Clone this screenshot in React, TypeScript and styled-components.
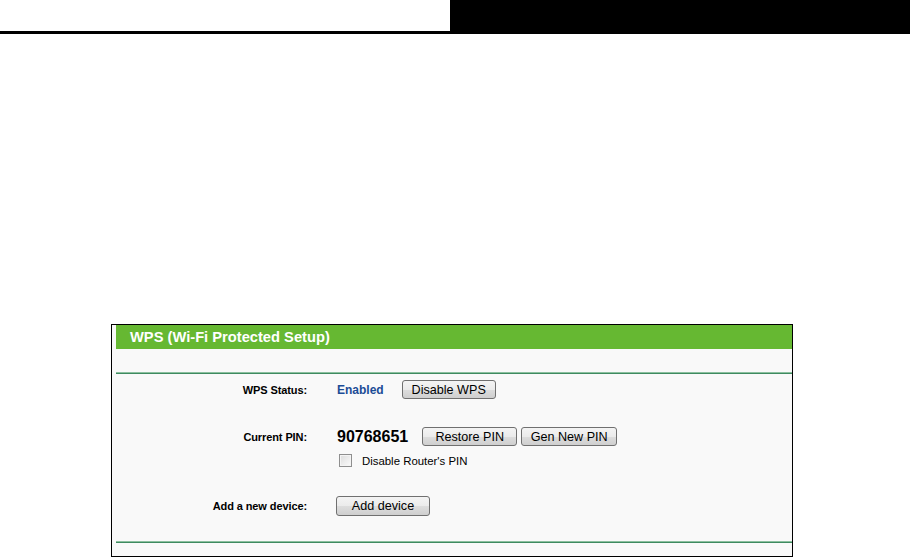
import React from 'react';
import { createGlobalStyle, styled } from 'styled-components';

const GlobalStyle = createGlobalStyle`
    html, body {
        margin: 0;
        padding: 0;
        background: #fff;
        font-family: "Liberation Sans", Arial, sans-serif;
    }
`;

const Page = styled.div`
    width: 910px;
    height: 558px;
    overflow: hidden;
`;

const TopBar = styled.div`
    display: flex;
    height: 34px;
`;

const TopLeft = styled.div`
    width: 450px;
    border-bottom: 3px solid #000;
    box-sizing: border-box;
`;

const TopRight = styled.div`
    flex: 1;
    background: #000;
`;

const Panel = styled.div`
    margin: 290px 0 0 111px;
    width: 682px;
    border: 1px solid #000;
    box-sizing: border-box;
    background: #f9f9f9;
    padding-left: 4px;
`;

const PanelTitle = styled.div`
    height: 24px;
    background: #66b832;
    color: #fff;
    font-weight: bold;
    font-size: 14.7px;
    line-height: 24px;
    padding-left: 14px;
`;

const Divider = styled.div<{ $top: number }>`
    margin-top: ${p => p.$top}px;
    height: 2px;
    background: linear-gradient(#8cc09f 0 50%, #3f8a60 50% 100%);
`;

const Body = styled.div`
    padding-top: 6px;
    display: flex;
    flex-direction: column;
`;

const Row = styled.div<{ $h: number; $top?: number }>`
    display: grid;
    grid-template-columns: 191px 1fr;
    column-gap: 29px;
    align-items: center;
    height: ${p => p.$h}px;
    margin-top: ${p => p.$top ?? 0}px;
`;

const Label = styled.div`
    text-align: right;
    font-weight: bold;
    font-size: 11px;
    color: #000;
    letter-spacing: -0.1px;
`;

const Field = styled.div`
    display: flex;
    align-items: center;
    height: 100%;
`;

const Status = styled.span`
    color: #1c4c96;
    font-weight: bold;
    font-size: 12px;
    margin-left: 1px;
    margin-right: 18px;
`;

const Pin = styled.span`
    font-weight: bold;
    font-size: 16px;
    color: #000;
    margin-left: 1px;
    margin-right: 14px;
`;

const Button = styled.button<{ $w: number }>`
    width: ${p => p.$w}px;
    height: 100%;
    box-sizing: border-box;
    padding: 0;
    margin-right: 4px;
    border: 1px solid #707070;
    border-radius: 3px;
    background: linear-gradient(#f4f4f4 0%, #ebebeb 50%, #dddddd 51%, #cfcfcf 100%);
    font-family: "Liberation Sans", Arial, sans-serif;
    font-size: 12.6px;
    color: #000;
    cursor: pointer;
`;

const CheckLabel = styled.label`
    display: flex;
    align-items: center;
    gap: 10px;
    font-size: 11.4px;
    color: #000;
    margin-left: 3px;
`;

const Box = styled.input`
    appearance: none;
    margin: 0;
    width: 13px;
    height: 13px;
    border: 1px solid #8f8f8f;
    box-sizing: border-box;
    background: linear-gradient(135deg, #dcdcdc, #fbfbfb);
    box-shadow: inset 0 0 0 1px #f4f4f4;
`;

export default function App() {
    return (
        <Page>
            <GlobalStyle />
            <TopBar>
                <TopLeft />
                <TopRight />
            </TopBar>
            <Panel>
                <PanelTitle>WPS (Wi-Fi Protected Setup)</PanelTitle>
                <Divider $top={23} />
                <Body>
                    <Row $h={19}>
                        <Label>WPS Status:</Label>
                        <Field>
                            <Status>Enabled</Status>
                            <Button $w={94}>Disable WPS</Button>
                        </Field>
                    </Row>
                    <Row $h={19} $top={28}>
                        <Label>Current PIN:</Label>
                        <Field>
                            <Pin>90768651</Pin>
                            <Button $w={95}>Restore PIN</Button>
                            <Button $w={96}>Gen New PIN</Button>
                        </Field>
                    </Row>
                    <Row $h={13} $top={8}>
                        <div />
                        <CheckLabel>
                            <Box type="checkbox" />
                            Disable Router's PIN
                        </CheckLabel>
                    </Row>
                    <Row $h={20} $top={29}>
                        <Label>Add a new device:</Label>
                        <Field>
                            <Button $w={94}>Add device</Button>
                        </Field>
                    </Row>
                </Body>
                <Divider $top={25} />
                <div style={{ height: 13 }} />
            </Panel>
        </Page>
    );
}
